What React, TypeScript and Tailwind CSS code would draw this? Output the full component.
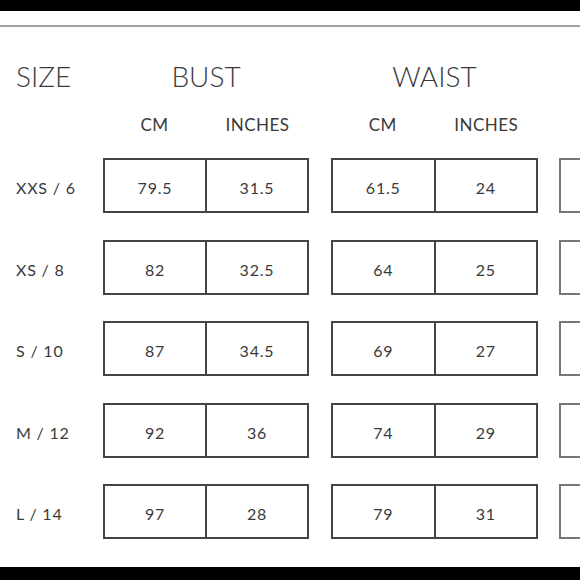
const rows = [
  { size: "XXS / 6", bust: ["79.5", "31.5"], waist: ["61.5", "24"] },
  { size: "XS / 8", bust: ["82", "32.5"], waist: ["64", "25"] },
  { size: "S / 10", bust: ["87", "34.5"], waist: ["69", "27"] },
  { size: "M / 12", bust: ["92", "36"], waist: ["74", "29"] },
  { size: "L / 14", bust: ["97", "28"], waist: ["79", "31"] },
];

function Box({ values, width, tone = "border-[#444]" }: { values: string[]; width: string; tone?: string }) {
  return (
    <div className={`flex shrink-0 h-[55px] border-2 ${tone} ${width}`}>
      <div className="flex-1 flex items-center justify-center pt-[5px]">{values[0]}</div>
      <div className={`flex-1 flex items-center justify-center pt-[5px] border-l-2 ${tone}`}>{values[1]}</div>
    </div>
  );
}

export default function App() {
  return (
    <div
      className="w-[580px] h-[580px] overflow-hidden bg-white flex flex-col text-[#3a3a3a]"
      style={{ fontFamily: "Lato, 'Open Sans', sans-serif" }}
    >
      <div className="h-[11px] bg-black shrink-0" />
      <div className="mt-[14px] h-[2px] bg-[#a3a3a3] shrink-0" />

      {/* headings */}
      <div className="mt-[35px] flex text-[28px] leading-[28px] font-light">
        <div className="w-[103px] pl-[16px]">SIZE</div>
        <div className="w-[206px] text-center">BUST</div>
        <div className="w-[207px] ml-[22px] text-center">WAIST</div>
      </div>

      <div className="mt-[26px] flex text-[17px] leading-[17px] tracking-[0.5px]">
        <div className="w-[103px]" />
        <div className="w-[206px] flex">
          <div className="flex-1 text-center">CM</div>
          <div className="flex-1 text-center">INCHES</div>
        </div>
        <div className="w-[207px] ml-[22px] flex">
          <div className="flex-1 text-center">CM</div>
          <div className="flex-1 text-center">INCHES</div>
        </div>
      </div>

      {/* size rows */}
      <div className="mt-[25px] flex flex-col gap-[26.5px] text-[16px] leading-[16px] tracking-[0.8px]">
        {rows.map((r) => (
          <div key={r.size} className="flex">
            <div className="w-[103px] shrink-0 pl-[16px] flex items-center pt-[5px]">{r.size}</div>
            <Box values={r.bust} width="w-[206px]" />
            <div className="w-[22px] shrink-0" />
            <Box values={r.waist} width="w-[207px]" />
            <div className="w-[21px] shrink-0" />
            <Box values={["", ""]} width="w-[207px]" tone="border-[#777]" />
          </div>
        ))}
      </div>

      <div className="mt-auto h-[13px] bg-black shrink-0" />
    </div>
  );
}
